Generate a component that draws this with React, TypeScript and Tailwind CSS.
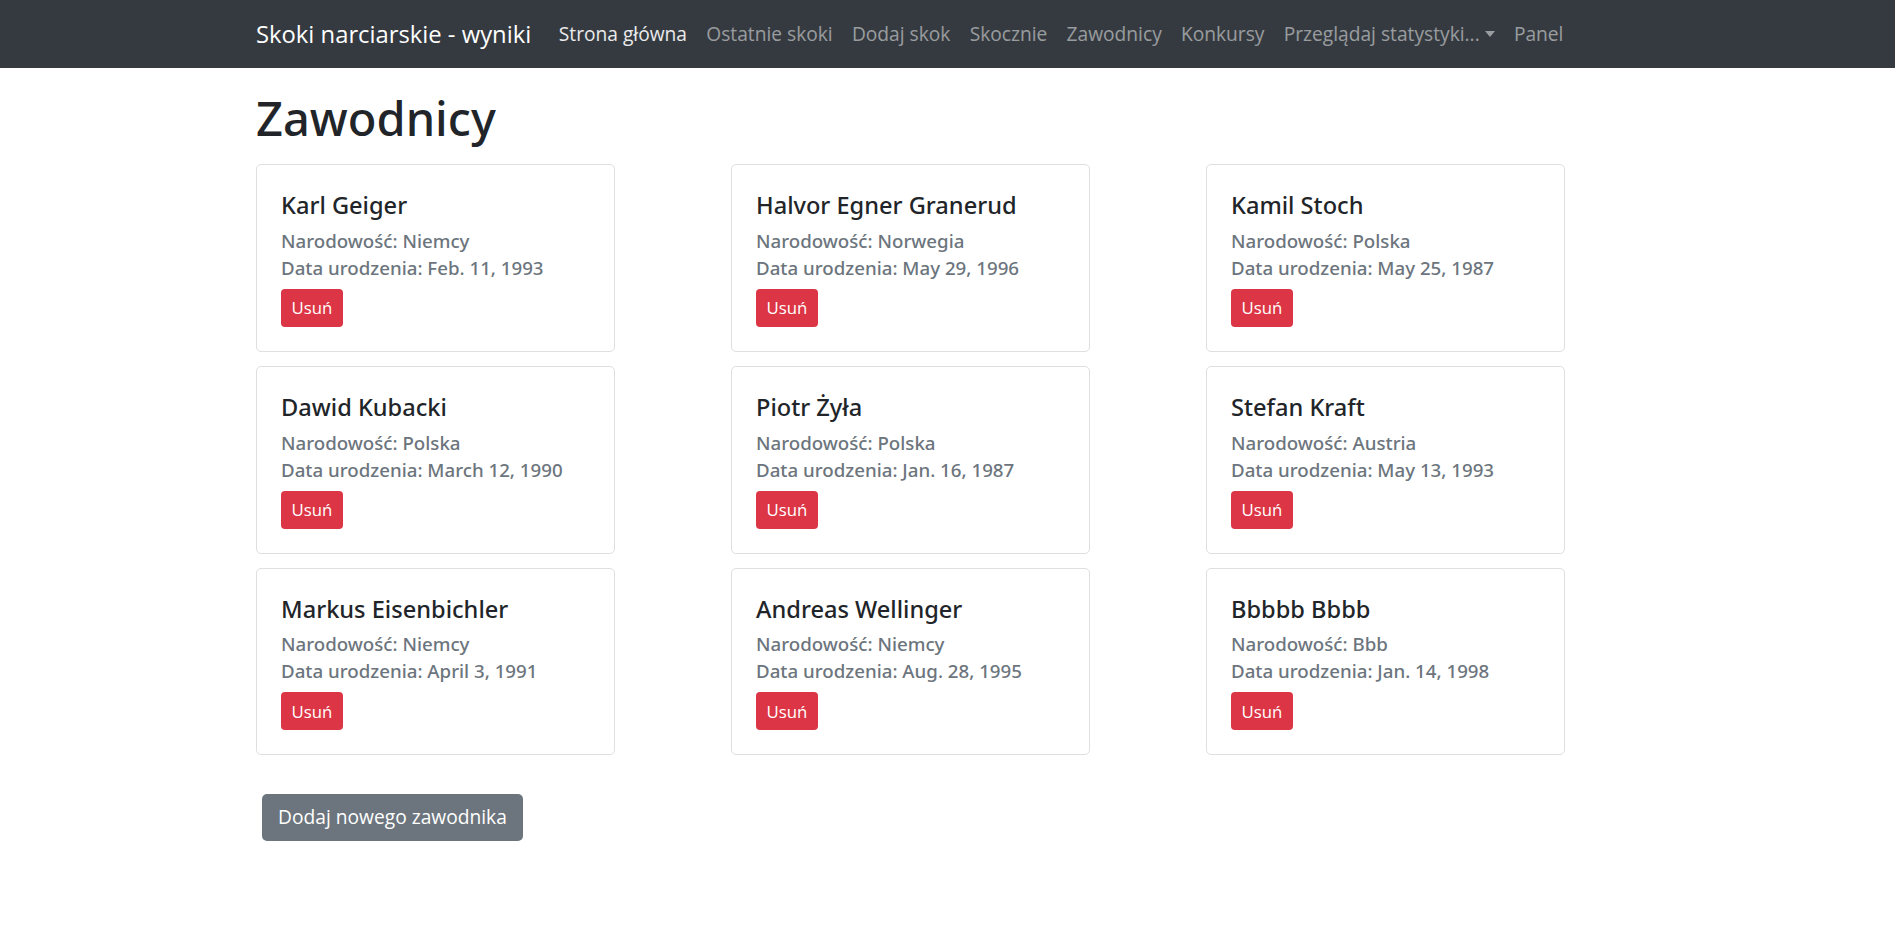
const navLinks = [
  { label: 'Strona główna', active: true },
  { label: 'Ostatnie skoki' },
  { label: 'Dodaj skok' },
  { label: 'Skocznie' },
  { label: 'Zawodnicy' },
  { label: 'Konkursy' },
  { label: 'Przeglądaj statystyki...', dropdown: true },
  { label: 'Panel' },
];

const jumpers = [
  { name: 'Karl Geiger', country: 'Niemcy', born: 'Feb. 11, 1993' },
  { name: 'Halvor Egner Granerud', country: 'Norwegia', born: 'May 29, 1996' },
  { name: 'Kamil Stoch', country: 'Polska', born: 'May 25, 1987' },
  { name: 'Dawid Kubacki', country: 'Polska', born: 'March 12, 1990' },
  { name: 'Piotr Żyła', country: 'Polska', born: 'Jan. 16, 1987' },
  { name: 'Stefan Kraft', country: 'Austria', born: 'May 13, 1993' },
  { name: 'Markus Eisenbichler', country: 'Niemcy', born: 'April 3, 1991' },
  { name: 'Andreas Wellinger', country: 'Niemcy', born: 'Aug. 28, 1995' },
  { name: 'Bbbbb Bbbb', country: 'Bbb', born: 'Jan. 14, 1998' },
];

function Navbar() {
  return (
    <nav className="h-[68px] bg-[#343a40]">
      <div className="ml-[256px] flex h-full w-[1309px] items-center whitespace-nowrap">
        <a className="mr-[18px] shrink-0 text-[23.8px] leading-[36px] text-white">Skoki narciarskie - wyniki</a>
        <ul className="flex shrink-0 items-center">
          {navLinks.map((link) => (
            <li key={link.label} className="shrink-0">
              <a
                className={
                  'flex items-center px-[9.6px] text-[19.2px] leading-[28.8px] ' +
                  (link.active ? 'text-white/90' : 'text-white/50')
                }
              >
                {link.label}
                {link.dropdown && (
                  <span className="ml-[5px] h-0 w-0 border-x-[5px] border-t-[6px] border-x-transparent border-t-white/50"></span>
                )}
              </a>
            </li>
          ))}
        </ul>
      </div>
    </nav>
  );
}

function JumperCard({ name, country, born }: { name: string; country: string; born: string }) {
  return (
    <div className="rounded-[5px] border border-[#dfdfdf] bg-white p-[24px]">
      <h5 className="mt-[2px] mb-[7px] font-['Noto_Sans',sans-serif] text-[23.6px] leading-[28.8px] font-medium text-[#212529]">
        {name}
      </h5>
      <h6 className="font-['Noto_Sans',sans-serif] text-[18.7px] leading-[27px] font-medium text-[#6c757d]">
        Narodowość: {country}
      </h6>
      <h6 className="font-['Noto_Sans',sans-serif] text-[18.7px] leading-[27px] font-medium text-[#6c757d]">
        Data urodzenia: {born}
      </h6>
      <button className="mt-[8px] h-[38px] rounded-[4px] bg-[#dc3545] px-[10.5px] text-[16.8px] leading-[25px] text-white">
        Usuń
      </button>
    </div>
  );
}

export default function App() {
  return (
    <div className="min-h-screen bg-white font-['Open_Sans',sans-serif]">
      <Navbar />
      <main className="ml-[256px] w-[1309px]">
        <h1 className="mt-[21.5px] mb-[17.5px] font-['Noto_Sans',sans-serif] text-[47px] leading-[57px] font-medium text-[#212529]">
          Zawodnicy
        </h1>
        <div className="grid grid-cols-[repeat(3,359px)] gap-x-[116px] gap-y-[14px]">
          {jumpers.map((j) => (
            <JumperCard key={j.name} {...j} />
          ))}
        </div>
        <button className="mt-[39px] ml-[6px] h-[47px] w-[261px] rounded-[5px] bg-[#6c757d] text-[19.2px] leading-[28.8px] text-white">
          Dodaj nowego zawodnika
        </button>
      </main>
    </div>
  );
}
